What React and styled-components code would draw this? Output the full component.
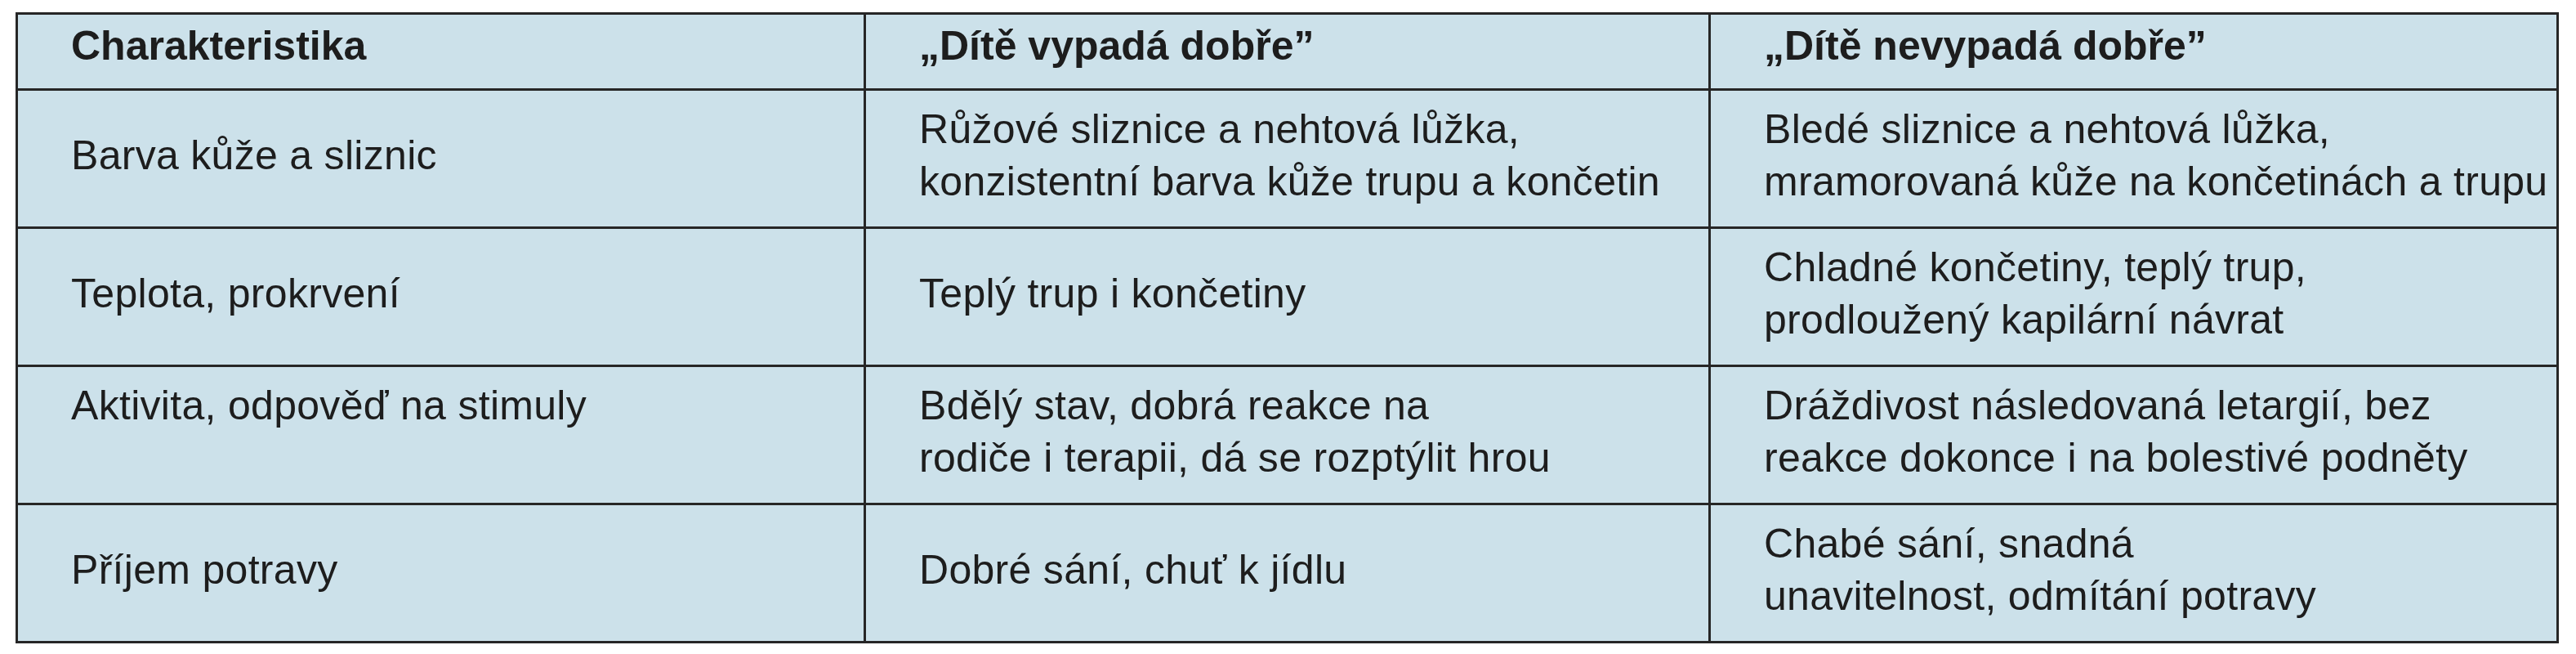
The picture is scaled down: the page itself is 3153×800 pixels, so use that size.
import React from 'react';
import styled, {createGlobalStyle} from 'styled-components';

const GlobalStyle = createGlobalStyle`
    html, body {
        margin: 0;
        padding: 0;
        background: #ffffff;
    }
    body {
        font-family: "Liberation Sans", Arial, sans-serif;
        color: #1d1d1d;
    }
`;

const rows = [
    {
        label: 'Barva kůže a sliznic',
        good: ['Růžové sliznice a nehtová lůžka,', 'konzistentní barva kůže trupu a končetin'],
        bad: ['Bledé sliznice a nehtová lůžka,', 'mramorovaná kůže na končetinách a trupu'],
    },
    {
        label: 'Teplota, prokrvení',
        good: ['Teplý trup i končetiny'],
        bad: ['Chladné končetiny, teplý trup,', 'prodloužený kapilární návrat'],
    },
    {
        label: 'Aktivita, odpověď na stimuly',
        labelTop: true,
        good: ['Bdělý stav, dobrá reakce na', 'rodiče i terapii, dá se rozptýlit hrou'],
        bad: ['Dráždivost následovaná letargií, bez', 'reakce dokonce i na bolestivé podněty'],
    },
    {
        label: 'Příjem potravy',
        good: ['Dobré sání, chuť k jídlu'],
        bad: ['Chabé sání, snadná', 'unavitelnost, odmítání potravy'],
    },
];

const Lines = ({lines}) => lines.map((line, i) => (
    <React.Fragment key={i}>
        {i > 0 && <br />}
        {line}
    </React.Fragment>
));

const App = () => {
    return (
        <>
            <GlobalStyle />
            <Page>
                <Table>
                    <colgroup>
                        <Col $w={1038} />
                        <Col $w={1034} />
                        <Col $w={1038} />
                    </colgroup>
                    <thead>
                        <tr>
                            <HeadCell>Charakteristika</HeadCell>
                            <HeadCell>„Dítě vypadá dobře”</HeadCell>
                            <HeadCell>„Dítě nevypadá dobře”</HeadCell>
                        </tr>
                    </thead>
                    <tbody>
                        {rows.map(row => (
                            <tr key={row.label}>
                                <Cell $top={row.labelTop}>{row.label}</Cell>
                                <Cell><Lines lines={row.good} /></Cell>
                                <Cell><Lines lines={row.bad} /></Cell>
                            </tr>
                        ))}
                    </tbody>
                </Table>
            </Page>
        </>
    );
};

export default App;

const Page = styled.div`
    padding: 15px 0 0 19px;
`;

const Table = styled.table`
    width: 3113px;
    table-layout: fixed;
    border-collapse: separate;
    border-spacing: 0;
    border-top: 3px solid #262626;
    border-left: 3px solid #262626;
    background-color: #cce1ea;
`;

const Col = styled.col`
    width: ${p => p.$w}px;
`;

const BaseCell = styled.td`
    border-right: 3px solid #262626;
    border-bottom: 3px solid #262626;
    padding-left: 65px;
    padding-right: 0;
    font-size: 50px;
    line-height: 64px;
    white-space: nowrap;
    overflow: hidden;
    text-align: left;
`;

const HeadCell = styled(BaseCell).attrs({as: 'th'})`
    height: 64px;
    padding-top: 6px;
    padding-bottom: 20px;
    font-weight: 700;
    vertical-align: middle;
`;

const Cell = styled(BaseCell)`
    height: 128px;
    padding-top: 15px;
    padding-bottom: 23px;
    font-weight: 400;
    letter-spacing: 0.3px;
    vertical-align: ${p => (p.$top ? 'top' : 'middle')};
`;
